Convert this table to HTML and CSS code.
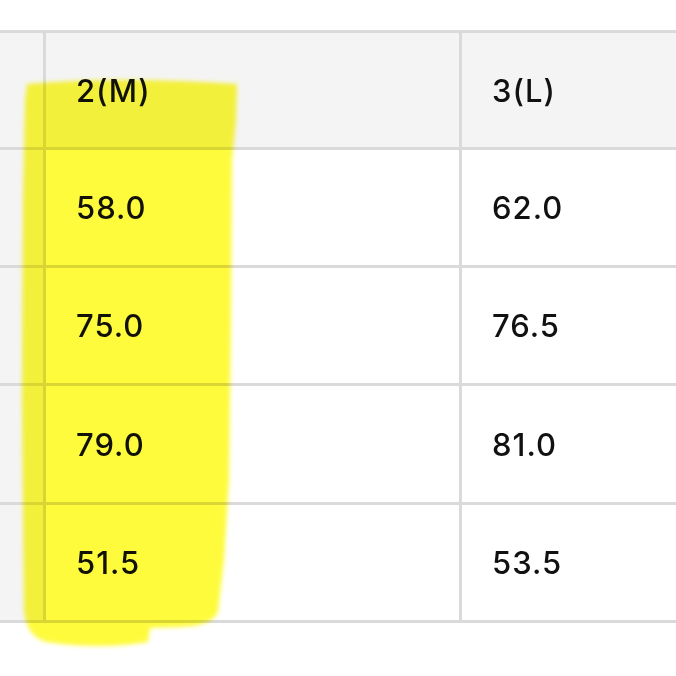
FILE: index.html
```html
<!DOCTYPE html>
<html>
<head>
<meta charset="utf-8">
<link rel="stylesheet" href="styles.css">
</head>
<body>
<div class="page">
  <div class="table">
    <div class="cell side"></div>
    <div class="cell head">2(M)</div>
    <div class="cell head">3(L)</div>

    <div class="cell side"></div>
    <div class="cell">58.0</div>
    <div class="cell">62.0</div>

    <div class="cell side"></div>
    <div class="cell">75.0</div>
    <div class="cell">76.5</div>

    <div class="cell side"></div>
    <div class="cell">79.0</div>
    <div class="cell">81.0</div>

    <div class="cell side"></div>
    <div class="cell">51.5</div>
    <div class="cell">53.5</div>
  </div>
  <svg class="marker" width="676" height="676" viewBox="0 0 676 676">
    <defs>
      <filter id="soft" x="-10%" y="-10%" width="120%" height="120%">
        <feGaussianBlur stdDeviation="2.2"/>
      </filter>
    </defs>
    <path filter="url(#soft)" d="M 27 84 Q 120 76 237 84 L 236 120 L 232 160 L 231 320 L 229 480 L 224 560 L 218 612 Q 212 626 180 627 L 150 628 L 148 642 Q 100 650 46 642 Q 26 636 24 610 L 22 400 L 23 200 L 25 100 Z"/>
  </svg>
</div>
</body>
</html>
```

FILE: styles.css
```css
html, body {
  margin: 0;
  padding: 0;
  background: #ffffff;
}

.page {
  position: relative;
  width: 676px;
  height: 676px;
  overflow: hidden;
  padding-top: 30px;
  box-sizing: border-box;
}

.table {
  display: grid;
  grid-template-columns: 43px 413px 260px;
  grid-template-rows: 114px 115px 115px 116px 115px;
  gap: 3px;
  padding: 3px 0;
  width: 740px;
  background: #dadada;
}

.cell {
  background: #ffffff;
  display: flex;
  align-items: center;
  padding-left: 30px;
  font-family: Inter, "Noto Sans", sans-serif;
  font-size: 31px;
  font-weight: 500;
  letter-spacing: 1px;
  color: #111111;
}

.cell.head,
.cell.side {
  background: #f4f4f4;
}

.cell.side {
  padding-left: 0;
}

.marker {
  position: absolute;
  top: 0;
  left: 0;
  pointer-events: none;
  mix-blend-mode: multiply;
  fill: #fefb3c;
}
```
